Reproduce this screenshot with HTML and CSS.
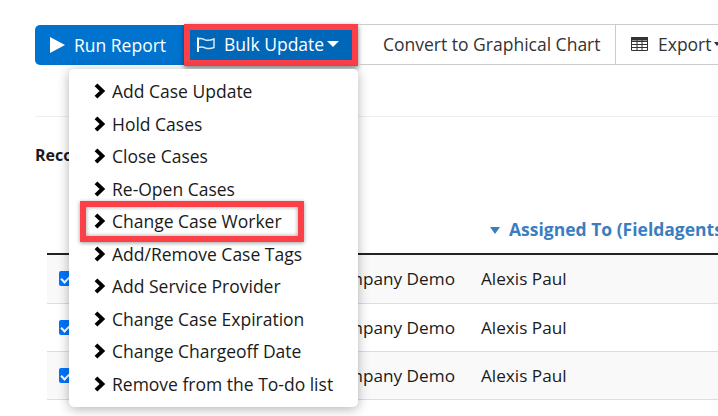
FILE: index.html
```html
<!DOCTYPE html>
<html lang="en">

<head>
    <meta charset="UTF-8">
    <title>Bulk Update</title>
    <link rel="stylesheet" href="styles.css">
</head>

<body>
    <svg class="defs" width="0" height="0">
        <symbol id="chevron" viewBox="0 0 12 16">
            <path d="M3.4 0.4 L11.2 8 L3.4 15.6 L0.6 12.8 L5.6 8 L0.6 3.2 Z" />
        </symbol>
    </svg>

    <div class="page">
        <div class="toolbar">
            <button class="btn btn-run">
                <svg class="icon-play" viewBox="0 0 15 16"><path d="M0 0 L15 8 L0 16 Z" /></svg>
                Run Report
            </button>
            <button class="btn btn-bulk">
                <svg class="icon-flag" viewBox="0 0 19 15">
                    <path class="flag-pole" d="M2 0.5 V15" />
                    <path d="M2 2 C5 0.8 7 2 9.5 3 C12 3.8 15 3.2 18 2 V10.5 C15 11.8 12.5 12 9.5 11 C7 10 5 9.5 2 10.8" />
                </svg>
                Bulk Update
                <span class="caret"></span>
            </button>
            <button class="btn btn-plain btn-chart">Convert to Graphical Chart</button>
            <button class="btn btn-plain btn-export">
                <svg class="icon-table" viewBox="0 0 17 14">
                    <path d="M0.5 0.5 H16.5 V13.5 H0.5 Z" />
                    <path d="M0.5 4.5 H16.5 M0.5 7.5 H16.5 M0.5 10.5 H16.5 M6 3 V13.5 M11 3 V13.5" />
                    <path class="table-head" d="M0.5 0.5 H16.5 V3 H0.5 Z" />
                </svg>
                Export
                <span class="caret caret-dark"></span>
            </button>
        </div>

        <hr class="divider">

        <div class="records-title">Records</div>

        <table class="cases">
            <thead>
                <tr>
                    <th class="col-check"></th>
                    <th class="col-company"></th>
                    <th class="col-worker"><span class="sort-caret"></span>Assigned To (Fieldagents)</th>
                </tr>
            </thead>
            <tbody>
                <tr class="first-row">
                    <td><span class="check"></span></td>
                    <td class="company">Company Demo</td>
                    <td>Alexis Paul</td>
                </tr>
                <tr>
                    <td><span class="check"></span></td>
                    <td class="company">Company Demo</td>
                    <td>Alexis Paul</td>
                </tr>
                <tr>
                    <td><span class="check"></span></td>
                    <td class="company">Company Demo</td>
                    <td>Alexis Paul</td>
                </tr>
                <tr>
                    <td><span class="check check-off"></span></td>
                    <td></td>
                    <td></td>
                </tr>
            </tbody>
        </table>

        <ul class="menu">
            <li><svg class="chevron"><use href="#chevron" /></svg>Add Case Update</li>
            <li><svg class="chevron"><use href="#chevron" /></svg>Hold Cases</li>
            <li><svg class="chevron"><use href="#chevron" /></svg>Close Cases</li>
            <li><svg class="chevron"><use href="#chevron" /></svg>Re-Open Cases</li>
            <li class="marked"><svg class="chevron"><use href="#chevron" /></svg>Change Case Worker</li>
            <li><svg class="chevron"><use href="#chevron" /></svg>Add/Remove Case Tags</li>
            <li><svg class="chevron"><use href="#chevron" /></svg>Add Service Provider</li>
            <li><svg class="chevron"><use href="#chevron" /></svg>Change Case Expiration</li>
            <li><svg class="chevron"><use href="#chevron" /></svg>Change Chargeoff Date</li>
            <li><svg class="chevron"><use href="#chevron" /></svg>Remove from the To-do list</li>
        </ul>
    </div>
</body>

</html>
```

FILE: styles.css
```css
html,
body {
    margin: 0;
    height: 416px;
    overflow: hidden;
    background-color: #fff;
}

body {
    font-family: 'Open Sans', sans-serif;
    font-size: 16px;
    color: #1a1a1a;
}

.defs {
    position: absolute;
}

.page {
    position: relative;
    width: 718px;
    height: 416px;
    padding: 24px 0 0 35px;
    box-sizing: border-box;
    overflow: hidden;
}

.toolbar {
    display: flex;
    width: 760px;
    height: 41px;
}

.btn {
    display: flex;
    align-items: center;
    height: 41px;
    padding: 0 0 1px 0;
    border: none;
    font-family: inherit;
    font-size: 17.5px;
    background: none;
    white-space: nowrap;
}

.btn-run {
    width: 149px;
    margin-top: 1px;
    height: 40px;
    padding-left: 15px;
    color: #fff;
    background-color: #0073cf;
    border-radius: 5px 0 0 5px;
}

.icon-play {
    width: 15px;
    height: 16px;
    margin-right: 9px;
    fill: #fff;
}

.btn-bulk {
    width: 174px;
    height: 42px;
    padding-left: 6px;
    padding-bottom: 2px;
    color: #fff;
    background-color: #0067b8;
    border: 6px solid #fb4048;
    box-shadow: 0 2px 5px rgba(0, 0, 0, 0.5);
    box-sizing: border-box;
}

.icon-flag {
    width: 19px;
    height: 15px;
    margin-right: 9px;
    fill: none;
    stroke: #d8e8f5;
    stroke-width: 1.5;
}

.flag-pole {
    stroke: #fff;
    stroke-width: 2;
}

.caret {
    width: 0;
    height: 0;
    margin-left: 3px;
    border-top: 6px solid #fff;
    border-left: 6px solid transparent;
    border-right: 6px solid transparent;
}

.caret-dark {
    margin-left: 2px;
    border-top: 4px solid #333;
    border-left: 3px solid transparent;
    border-right: 3px solid transparent;
}

.btn-plain {
    color: #333;
    border-top: 1px solid #ccc;
    border-bottom: 1px solid #ccc;
    border-right: 1px solid #ccc;
    box-sizing: border-box;
}

.btn-chart {
    width: 258px;
    padding-left: 25px;
}

.btn-export {
    width: 120px;
    padding-left: 15px;
    border-right: none;
}

.icon-table {
    width: 17px;
    height: 14px;
    margin-right: 10px;
    fill: none;
    stroke: #333;
    stroke-width: 1;
}

.table-head {
    fill: #333;
}

.divider {
    width: 700px;
    margin: 51px 0 0 0;
    border: none;
    border-top: 1px solid #eee;
}

.records-title {
    margin-top: 26px;
    font-weight: 700;
    font-size: 16px;
    line-height: 24px;
}

.cases {
    width: 760px;
    margin: 0 0 0 12px;
    border-collapse: collapse;
    table-layout: fixed;
    font-size: 17.2px;
}

.cases th {
    height: 87px;
    padding: 0 0 12px 0;
    box-sizing: border-box;
    text-align: left;
    vertical-align: bottom;
    font-size: 17.5px;
    color: #3a7ebf;
    border-bottom: 2px solid #222;
    white-space: nowrap;
}

.col-check {
    width: 52px;
}

.col-company {
    width: 382px;
}

.col-worker {
    width: auto;
}

.sort-caret {
    display: inline-block;
    width: 0;
    height: 0;
    margin: 0 9px 2px 9px;
    border-top: 7px solid #3a7ebf;
    border-left: 5px solid transparent;
    border-right: 5px solid transparent;
}

.cases td {
    height: 48px;
    padding: 0;
    box-sizing: border-box;
    border-bottom: 1px solid #ddd;
    vertical-align: middle;
}

.cases .first-row td {
    height: 49px;
}

.cases tbody tr:nth-child(odd) {
    background-color: #f9f9f9;
}

.cases tbody tr:last-child {
    background-color: #fff;
}

.cases td:first-child {
    padding-left: 12px;
}

.cases td.company {
    text-align: right;
    padding-right: 26px;
}

.check {
    position: relative;
    display: block;
    width: 14px;
    height: 15px;
    border-radius: 2px;
    background-color: #0075ff;
}

.check::after {
    content: "";
    position: absolute;
    left: 4px;
    top: 2px;
    width: 4px;
    height: 8px;
    border: solid #fff;
    border-width: 0 2px 2px 0;
    transform: rotate(45deg);
}

.check-off {
    box-sizing: border-box;
    background-color: #fff;
    border: 1px solid #767676;
}

.check-off::after {
    display: none;
}

.menu {
    position: absolute;
    left: 69px;
    top: 69px;
    width: 289px;
    height: 338px;
    margin: 0;
    padding: 5.8px 0 0 0;
    box-sizing: border-box;
    list-style: none;
    background-color: #fff;
    border-radius: 5px;
    box-shadow: 0 2px 12px rgba(0, 0, 0, 0.3);
    font-size: 17.5px;
    color: #1a1a1a;
}

.menu li {
    position: relative;
    display: flex;
    align-items: center;
    height: 32.5px;
    padding-left: 25px;
    white-space: nowrap;
}

.chevron {
    width: 12px;
    height: 16px;
    margin-right: 6px;
    fill: #000;
}

.marked::after {
    content: "";
    position: absolute;
    left: 11px;
    top: -4px;
    width: 224px;
    height: 41px;
    box-sizing: border-box;
    border: 6px solid #fb4048;
    box-shadow: 0 1px 4px rgba(0, 0, 0, 0.4), inset 0 0 4px rgba(0, 0, 0, 0.4);
}
```
